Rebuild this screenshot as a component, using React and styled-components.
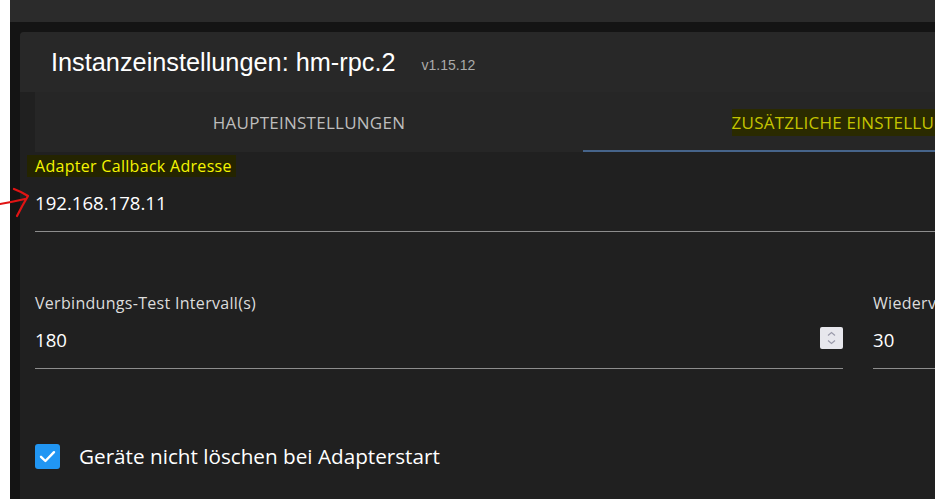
import React from "react";
import styled, { createGlobalStyle } from "styled-components";

const GlobalStyle = createGlobalStyle`
  html, body {
    margin: 0;
    padding: 0;
    background: #ffffff;
    overflow: hidden;
  }
  * {
    box-sizing: border-box;
  }
`;

const tabs = [
  { id: "main", label: "Haupteinstellungen" },
  { id: "extra", label: "Zusätzliche Einstellungen", active: true, marked: true },
  { id: "more", label: "Erweiterte Einstellungen" },
];

function Spinner() {
  return (
    <SpinBox>
      <svg width="23" height="22" viewBox="0 0 23 22" fill="none">
        <path d="M8 8.5 L11.5 5.5 L15 8.5" stroke="#9b9bab" strokeWidth="1.2" />
        <path d="M8 13.5 L11.5 16.5 L15 13.5" stroke="#9b9bab" strokeWidth="1.2" />
      </svg>
    </SpinBox>
  );
}

function App() {
  return (
    <Page>
      <GlobalStyle />
      <Shell>
        <TopBar />
        <Stage>
          <Dialog>
            <Header>
              <Title>Instanzeinstellungen: hm-rpc.2</Title>
              <Version>v1.15.12</Version>
            </Header>
            <DialogBody>
              <TabBar>
                {tabs.map((tab) => (
                  <Tab key={tab.id} active={tab.active}>
                    <TabText marked={tab.marked}>{tab.label}</TabText>
                  </Tab>
                ))}
              </TabBar>

              <Form>
                <Field>
                  <Label marked>Adapter Callback Adresse</Label>
                  <InputLine>
                    <Value>192.168.178.11</Value>
                  </InputLine>
                </Field>

                <FieldRow>
                  <Field>
                    <Label>Verbindungs-Test Intervall(s)</Label>
                    <InputLine>
                      <Value>180</Value>
                      <Spinner />
                    </InputLine>
                  </Field>
                  <Field>
                    <Label>Wiederverbindungs-Intervall(s)</Label>
                    <InputLine>
                      <Value>30</Value>
                    </InputLine>
                  </Field>
                </FieldRow>

                <CheckRow>
                  <CheckBox>
                    <svg width="25" height="25" viewBox="0 0 25 25" fill="none">
                      <path
                        d="M6 12.8 L10.4 17 L19 8.2"
                        stroke="#ffffff"
                        strokeWidth="2.4"
                        strokeLinecap="round"
                        strokeLinejoin="round"
                      />
                    </svg>
                  </CheckBox>
                  <CheckLabel>Geräte nicht löschen bei Adapterstart</CheckLabel>
                </CheckRow>
              </Form>
            </DialogBody>
          </Dialog>
        </Stage>
      </Shell>

      {/* red hand-drawn arrow from the screenshot */}
      <Arrow width="34" height="40" viewBox="0 0 34 40" fill="none">
        <path
          d="M0 24 Q12 22 25 19 M14 9 Q22 12 28 16 Q22 26 17 36"
          stroke="#e01414"
          strokeWidth="2.2"
          strokeLinecap="round"
          strokeLinejoin="round"
        />
      </Arrow>
    </Page>
  );
}

export default App;

const Page = styled.div`
  position: relative;
  width: 935px;
  height: 499px;
  padding-left: 10px;
  display: flex;
  overflow: hidden;
  background: #ffffff;
`;

const Shell = styled.div`
  flex: 1;
  min-width: 0;
  display: flex;
  flex-direction: column;
  background: #141414;
`;

const TopBar = styled.div`
  height: 22px;
  flex-shrink: 0;
  background: #2b2b2b;
`;

const Stage = styled.div`
  flex: 1;
  padding: 10px 0 0 10px;
`;

const Dialog = styled.div`
  width: 1676px;
  height: 100%;
  background: #202020;
  border-radius: 4px 4px 0 0;
`;

const Header = styled.div`
  height: 60px;
  display: flex;
  align-items: center;
  padding: 0 31px;
  background: #282828;
  border-radius: 4px 4px 0 0;
  font-family: "Liberation Sans", Arial, sans-serif;
`;

const Title = styled.div`
  font-size: 25.3px;
  color: #ffffff;
`;

const Version = styled.div`
  margin-left: 26px;
  margin-top: 5px;
  font-size: 14px;
  color: #ababab;
`;

const DialogBody = styled.div`
  padding: 0 15px;
`;

const TabBar = styled.div`
  display: grid;
  grid-template-columns: repeat(3, 548px);
  height: 60px;
  background: #262626;
`;

const Tab = styled.div`
  display: flex;
  align-items: center;
  justify-content: center;
  border-bottom: 2px solid ${(p) => (p.active ? "#46648a" : "transparent")};
  padding-top: 2px;
  font-family: "Open Sans", sans-serif;
  font-size: 17px;
  letter-spacing: 0.25px;
  text-transform: uppercase;
  white-space: nowrap;
  color: #bdbdbd;
`;

const TabText = styled.span`
  padding: 2px 0;
  ${(p) => p.marked && "background: #2a2a00; color: #c4c400;"}
`;

const Form = styled.div`
  padding-top: 3px;
  font-family: "Open Sans", sans-serif;
`;

const Field = styled.div`
  display: flex;
  flex-direction: column;
  min-width: 0;
`;

const Label = styled.div`
  align-self: flex-start;
  height: 22px;
  line-height: 22px;
  font-size: 16px;
  letter-spacing: 0.3px;
  white-space: nowrap;
  color: ${(p) => (p.marked ? "#f5f500" : "#dcdcdc")};
  ${(p) =>
    p.marked &&
    "background: #242400; margin-left: -8px; padding: 0 4px 0 8px;"}
`;

const InputLine = styled.div`
  display: flex;
  align-items: center;
  margin-top: 13px;
  height: 42px;
  padding-bottom: 15px;
  border-bottom: 1px solid #8d8d8d;
`;

const Value = styled.div`
  flex: 1;
  font-size: 18.6px;
  line-height: 26px;
  color: #ffffff;
  white-space: nowrap;
`;

const SpinBox = styled.div`
  width: 23px;
  height: 22px;
  margin-top: -4px;
  border-radius: 2px;
  background: #e7e7ed;
  display: flex;
`;

const FieldRow = styled.div`
  display: grid;
  grid-template-columns: 808px 808px;
  column-gap: 30px;
  margin-top: 60px;
`;

const CheckRow = styled.div`
  display: flex;
  align-items: center;
  gap: 19px;
  margin-top: 73px;
`;

const CheckBox = styled.div`
  width: 25px;
  height: 25px;
  flex-shrink: 0;
  border-radius: 3px;
  background: #2196f3;
  display: flex;
`;

const CheckLabel = styled.div`
  font-size: 20.7px;
  line-height: 28px;
  color: #ffffff;
`;

const Arrow = styled.svg`
  position: absolute;
  left: 0;
  top: 180px;
`;
